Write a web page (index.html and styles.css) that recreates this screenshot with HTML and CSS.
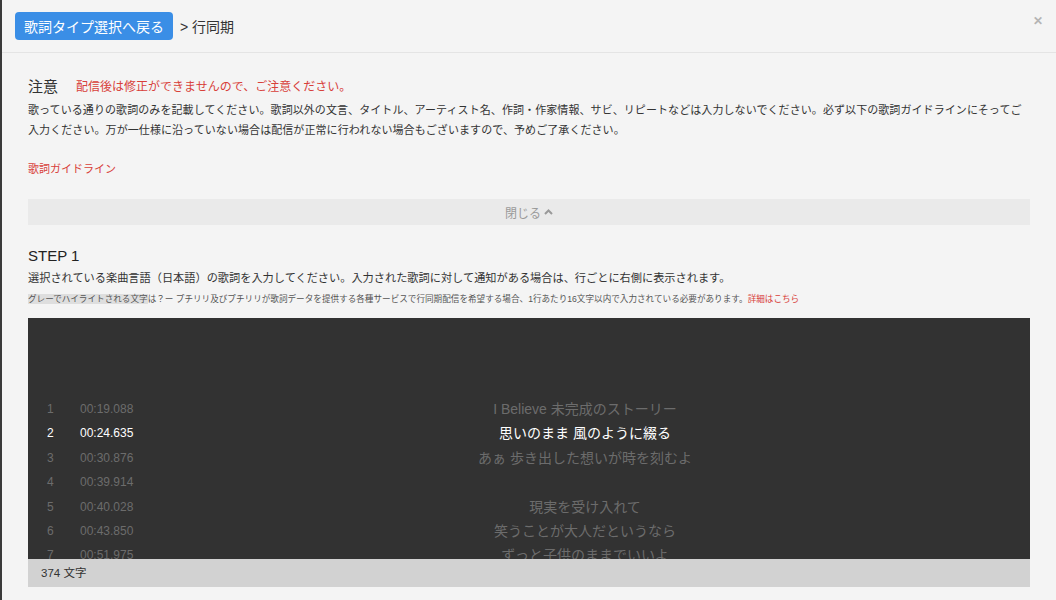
FILE: index.html
```html
<!DOCTYPE html>
<html lang="ja">
<head>
  <meta charset="UTF-8" />
  <meta name="viewport" content="width=device-width, initial-scale=1.0"/>
  <title>行同期</title>
  <link rel="stylesheet" href="styles.css">
</head>
<body>
  <div class="modal">
    <header class="modal-head">
      <button class="back-btn">歌詞タイプ選択へ戻る</button>
      <span class="crumb">&gt; 行同期</span>
      <span class="close-x">&#x2715;</span>
    </header>

    <main class="modal-body">
      <section class="notice">
        <h2 class="notice-title">注意<span class="warn">配信後は修正ができませんので、ご注意ください。</span></h2>
        <p class="notice-text">歌っている通りの歌詞のみを記載してください。歌詞以外の文言、タイトル、アーティスト名、作詞・作家情報、サビ、リピートなどは入力しないでください。必ず以下の歌詞ガイドラインにそってご入力ください。万が一仕様に沿っていない場合は配信が正常に行われない場合もございますので、予めご了承ください。</p>
        <a class="guide-link" href="#">歌詞ガイドライン</a>
      </section>

      <button class="collapse-bar">閉じる
        <svg class="chev" width="9" height="6" viewBox="0 0 9 6"><path d="M1 5 L4.5 1.5 L8 5" fill="none" stroke="currentColor" stroke-width="2"/></svg>
      </button>

      <section class="step">
        <h2 class="step-title">STEP 1</h2>
        <p class="step-desc">選択されている楽曲言語（日本語）の歌詞を入力してください。入力された歌詞に対して通知がある場合は、行ごとに右側に表示されます。</p>
        <p class="step-hint"><span class="hl">グレーでハイライトされる文字</span>は？ー プチリリ及びプチリリが歌詞データを提供する各種サービスで行同期配信を希望する場合、1行あたり16文字以内で入力されている必要があります。<a href="#">詳細はこちら</a></p>
      </section>

      <div class="editor">
        <div class="lines">
          <div class="row"><span class="num">1</span><span class="time">00:19.088</span><span class="lyric">I Believe 未完成のストーリー</span></div>
          <div class="row active"><span class="num">2</span><span class="time">00:24.635</span><span class="lyric">思いのまま 風のように綴る</span></div>
          <div class="row"><span class="num">3</span><span class="time">00:30.876</span><span class="lyric">あぁ 歩き出した想いが時を刻むよ</span></div>
          <div class="row"><span class="num">4</span><span class="time">00:39.914</span><span class="lyric"></span></div>
          <div class="row"><span class="num">5</span><span class="time">00:40.028</span><span class="lyric">現実を受け入れて</span></div>
          <div class="row"><span class="num">6</span><span class="time">00:43.850</span><span class="lyric">笑うことが大人だというなら</span></div>
          <div class="row"><span class="num">7</span><span class="time">00:51.975</span><span class="lyric">ずっと子供のままでいいよ</span></div>
        </div>
        <div class="count">374 文字</div>
      </div>
    </main>
  </div>
</body>
</html>
```

FILE: styles.css
```css
html, body {
  margin: 0;
  padding: 0;
  height: 100%;
}

body {
  font-family: "Liberation Sans", "Noto Sans CJK JP", sans-serif;
  background-color: #f4f4f4;
  color: #333;
  border-left: 2px solid #3a3a3a;
  box-sizing: border-box;
  overflow: hidden;
}

.modal-head {
  display: flex;
  align-items: center;
  height: 53px;
  padding: 0 13px;
  border-bottom: 1px solid #e4e4e4;
  box-sizing: border-box;
  position: relative;
}

.back-btn {
  font-family: inherit;
  font-size: 14px;
  color: #fff;
  background: #3a8ee6;
  border: none;
  border-radius: 4px;
  height: 28px;
  padding: 0 9px;
  margin-top: -1px;
}

.crumb {
  font-size: 14px;
  color: #333;
  margin-left: 7px;
}

.close-x {
  position: absolute;
  right: 13px;
  top: 14px;
  font-size: 12px;
  font-weight: bold;
  color: #b4b4b4;
}

.modal-body {
  padding: 24px 26px 0 26px;
}

.notice-title {
  margin: 0;
  font-size: 15px;
  font-weight: normal;
  line-height: 20px;
  color: #333;
}

.warn {
  font-size: 12px;
  color: #d8403a;
  margin-left: 18px;
  vertical-align: 1px;
}

.notice-text {
  margin: 3px 0 0;
  font-size: 11px;
  letter-spacing: 0.08px;
  line-height: 20px;
  color: #333;
}

.guide-link {
  display: block;
  margin-top: 19px;
  font-size: 11px;
  line-height: 20px;
  color: #d8403a;
  text-decoration: none;
}

.collapse-bar {
  display: flex;
  align-items: center;
  justify-content: center;
  gap: 3px;
  width: 100%;
  height: 26px;
  margin-top: 20px;
  border: none;
  background: #eaeaea;
  color: #9a9a9a;
  font-family: inherit;
  font-size: 12px;
  padding: 0;
}

.step-title {
  margin: 20px 0 0;
  font-size: 15px;
  font-weight: 500;
  line-height: 22px;
  color: #222;
}

.step-desc {
  margin: 2px 0 0;
  font-size: 11.2px;
  line-height: 18px;
  color: #333;
}

.step-hint {
  margin: 5px 0 0;
  font-size: 8.6px;
  line-height: 14px;
  color: #555;
}

.step-hint .hl {
  background: #dedede;
}

.step-hint a {
  color: #d8403a;
  text-decoration: none;
}

.editor {
  margin-top: 12px;
}

.lines {
  height: 241px;
  overflow: hidden;
  background: #323232;
  padding-top: 79px;
  box-sizing: border-box;
}

.row {
  display: grid;
  grid-template-columns: 52px 60px 1fr;
  line-height: 24.4px;
  color: #6c6c6c;
}

.num {
  padding-left: 19px;
  font-size: 12px;
}

.time {
  font-size: 12px;
}

.lyric {
  text-align: center;
  font-size: 14px;
}

.row.active {
  color: #fff;
}

.count {
  height: 28px;
  line-height: 28px;
  background: #d2d2d2;
  padding-left: 13px;
  font-size: 11.5px;
  color: #333;
}
```
